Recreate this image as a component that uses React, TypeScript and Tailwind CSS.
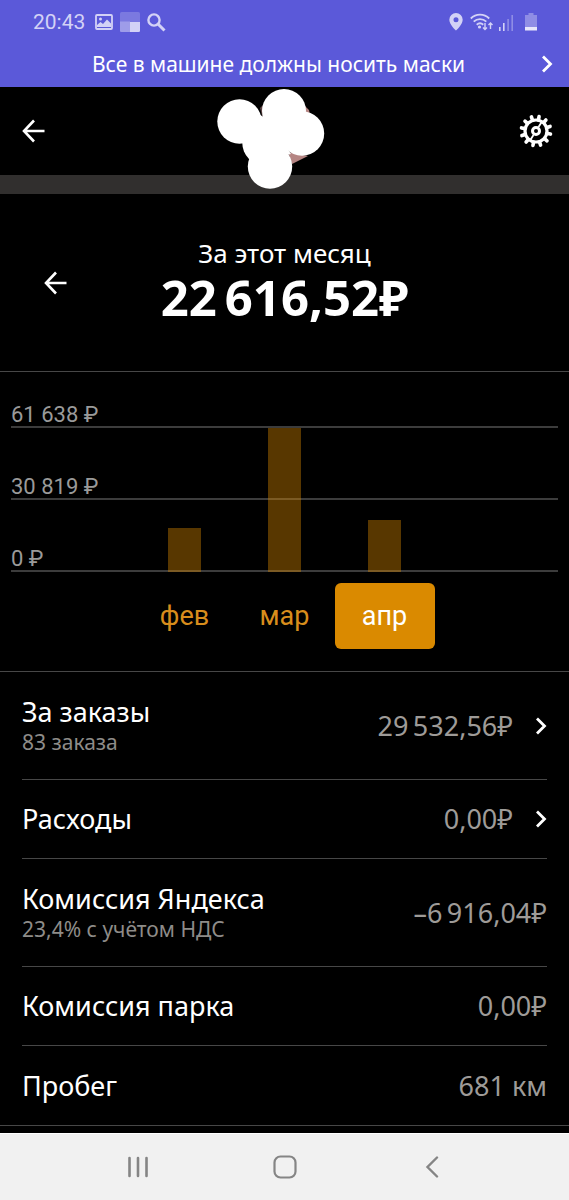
import clsx from "clsx";

type Month = {
  id: number,
  name: string,
  height: number
}

type RowProps = {
  title: string,
  note?: string,
  value: string,
  link?: boolean
}

const gridLabels = ['61 638 ₽', '30 819 ₽', '0 ₽']

const months: Month[] = [
  {id: 0, name: 'фев', height: 44},
  {id: 1, name: 'мар', height: 144},
  {id: 2, name: 'апр', height: 52},
]

const rows: RowProps[] = [
  {title: 'За заказы', note: '83 заказа', value: '29\u2009532,56₽', link: true},
  {title: 'Расходы', value: '0,00₽', link: true},
  {title: 'Комиссия Яндекса', note: '23,4% с учётом НДС', value: '–6\u2009916,04₽'},
  {title: 'Комиссия парка', value: '0,00₽'},
  {title: 'Пробег', value: '681 км'},
]

const teeth = [12, 42, 72, 102, 132, 162, 192, 222, 252, 282, 312, 342]

function ArrowLeft() {
  return (
    <svg width="24" height="24" viewBox="0 0 24 24" fill="none" stroke="#fff" strokeWidth="2.6">
      <path d="M12 1.500 2 12l10 10.500M2 12H22.500" />
    </svg>
  )
}

function Chevron() {
  return (
    <svg className="shrink-0" width="12" height="18" viewBox="0 0 12 18" fill="none" stroke="#fff" strokeWidth="2.8">
      <path d="M2 1.500 9.500 9 2 16.500" />
    </svg>
  )
}

function Gear() {
  return (
    <svg width="34" height="34" viewBox="-17 -17 34 34" fill="none" stroke="#fff">
      <circle r="11" strokeWidth="3.200" />
      {teeth.map((angle) => (
        <path key={angle} d="M11.500 0H14.800" strokeWidth="3.600" strokeLinecap="round" transform={`rotate(${angle})`} />
      ))}
      <circle r="3.500" strokeWidth="3" />
      <path d="M2.500-4 6-9.500M-2.500 4-6 9.500" strokeWidth="1.800" />
    </svg>
  )
}

function StatusBar() {
  return (
    <div className="flex h-11 items-center justify-between pl-[33px] pr-8 text-[#d3d2f6]">
      <div className="flex items-center">
        <span className="font-[Roboto,sans-serif] text-[21px] leading-6">20:43</span>
        <svg className="ml-[10px]" width="18" height="16" viewBox="0 0 18 16" fill="none" stroke="currentColor">
          <rect x="1" y="1" width="16" height="14" rx="1" strokeWidth="1.800" />
          <circle cx="5.500" cy="5" r="1.500" fill="currentColor" stroke="none" />
          <path d="M2 13V11l3.500-3 2.500 2 4-4.500 4 4V13z" fill="currentColor" stroke="none" />
        </svg>
        <svg className="ml-[7px]" width="20" height="20" viewBox="0 0 20 20">
          <rect width="20" height="20" rx="1.500" fill="#7b79e0" />
          <path d="M0 9.500h10V20H1.500Q0 20 0 18.500z" fill="#9e9ce9" />
          <path d="M10 10h10v8.500q0 1.500-1.500 1.500H10z" fill="#d3d2f6" />
        </svg>
        <svg className="ml-[7px]" width="19" height="19" viewBox="0 0 19 19" fill="none" stroke="currentColor" strokeWidth="2.400">
          <circle cx="7" cy="7" r="5.600" />
          <path d="m11 11 6.500 6.500" strokeWidth="3" />
        </svg>
      </div>
      <div className="flex items-center">
        <svg width="14" height="18" viewBox="0 0 14 18">
          <path fill="currentColor" fillRule="evenodd" d="M7 0a6.700 6.700 0 0 0-6.700 6.700C.3 11.500 7 17.500 7 17.500s6.700-6 6.700-10.800A6.700 6.700 0 0 0 7 0m0 4.200a2.500 2.500 0 1 1 0 5 2.500 2.500 0 0 1 0-5" />
        </svg>
        <svg className="ml-[7px]" width="23" height="18" viewBox="0 0 23 18" fill="none" stroke="currentColor" strokeWidth="1.800">
          <path d="M.8 5.500a13 13 0 0 1 18.400 0M3.700 8.700a9 9 0 0 1 12.600 0M6.700 11.700a5 5 0 0 1 6.600 0" />
          <circle cx="9.500" cy="14" r="1.600" fill="currentColor" stroke="none" />
          <path d="M15 10v6.500M13 14.500l2 2 2-2M20.500 16V10M18.500 12l2-2 2 2" strokeWidth="1.400" />
        </svg>
        <svg className="ml-[5px]" width="16" height="17" viewBox="0 0 16 17">
          <path d="M1 13h1.600v4H1zM5 9h1.600v8H5z" fill="#d3d2f6" />
          <path d="M9.300 5h1.600v12H9.300zM13.400 1h1.600v16h-1.600z" fill="#8f8de5" />
        </svg>
        <svg className="ml-[11px]" width="12" height="18" viewBox="0 0 12 18">
          <path d="M3.500 0h5v2H12v12H0V2h3.500z" fill="#8f8de5" />
          <path d="M0 14h12v3.500H0z" fill="#e8e7fb" />
        </svg>
      </div>
    </div>
  )
}

function Blob() {
  return (
    <svg className="absolute left-[216px] top-0" width="110" height="104" viewBox="216 87 110 104">
      <path d="M260 108l3-3 0 14z" fill="#5e4444" />
      <path d="M303 104l6 6 1 5-6-3zM288 152l20 4-16 8z" fill="#b58583" />
      <g fill="#fff">
        <circle cx="239.500" cy="121.500" r="22.200" />
        <circle cx="284" cy="111" r="22" />
        <circle cx="302" cy="133.500" r="22.200" />
        <circle cx="264.500" cy="143" r="22.200" />
        <circle cx="270" cy="166.500" r="22.200" />
        <path d="M257 113l10 6 24 35-9 2-36-14z" />
      </g>
    </svg>
  )
}

function Row({title, note, value, link}: RowProps) {
  const rowClass = clsx(
    "flex w-full items-center border-b border-[#474747] text-left",
    note ? 'h-[108px]' : 'h-[79px]'
  )
  const content = (
    <>
      <span className="grow">
        <span className="block text-[27px] leading-8">{title}</span>
        {note && <span className="block text-[21px] leading-7 text-[#8e8c89]">{note}</span>}
      </span>
      <span className="text-[27px] leading-8 text-[#9e9b98]">{value}</span>
      {link && <span className="ml-[22px]"><Chevron /></span>}
    </>
  )

  return link
    ? <button type="button" className={rowClass}>{content}</button>
    : <div className={rowClass}>{content}</div>
}

export default function App() {
  const current = 2

  return (
    <div className="flex min-h-screen flex-col bg-black font-['Noto_Sans',sans-serif] text-white">
      <div className="bg-[#5b59d9]">
        <StatusBar />
        <button type="button" className="flex h-[43px] w-full items-center px-4 pb-[3px] text-[21px] leading-7">
          <span className="grow text-center">Все в машине должны носить маски</span>
          <Chevron />
        </button>
      </div>

      <header className="relative flex h-[107px] items-start justify-between border-b-[19px] border-[#312f2e] pl-[22px] pr-4">
        <button type="button" aria-label="Назад" className="flex h-22 items-center"><ArrowLeft /></button>
        <Blob />
        <button type="button" aria-label="Настройки" className="flex h-22 items-center"><Gear /></button>
      </header>

      <section className="flex h-[178px] items-center border-b border-[#474747] px-11">
        <button type="button" aria-label="Предыдущий месяц" className="w-6"><ArrowLeft /></button>
        <div className="grow pr-6 text-center">
          <p className="text-[26px] leading-7">За этот месяц</p>
          <p className="text-[49px] font-bold leading-[60px]">{'22\u2009616,52₽'}</p>
        </div>
      </section>

      <section className="border-b border-[#474747] pb-[22px] font-[Roboto,sans-serif]">
        <div className="grid px-[11px]">
          <div className="col-start-1 row-start-1">
            {gridLabels.map((label, index) => (
              <div
                key={label}
                className={clsx(
                  "flex items-end border-b-2 border-[#3c3c3c] text-[22px] leading-[22px] text-[#9a9a9a]",
                  index === 0 ? 'h-14' : 'h-[72px]'
                )}
              >
                {label}
              </div>
            ))}
          </div>
          <div className="col-start-1 row-start-1 flex items-end justify-center">
            {months.map((item) => (
              <div key={item.id} className="flex w-[100px] justify-center">
                <div className="w-[33px] bg-[#dc8900]/40" style={{height: item.height}} />
              </div>
            ))}
          </div>
        </div>
        <div className="mt-[11px] flex justify-center">
          {months.map((item) => (
            <button
              key={item.id}
              type="button"
              className={clsx(
                "h-[66px] w-[100px] rounded-md text-[27px] leading-8",
                item.id === current ? 'bg-[#da8a00] text-white' : 'text-[#d88d1c]'
              )}
            >
              {item.name}
            </button>
          ))}
        </div>
      </section>

      <section className="border-b border-[#474747] px-[22px] [&>*:last-child]:border-b-0">
        {rows.map((item) => (
          <Row key={item.title} {...item} />
        ))}
      </section>

      <nav className="mt-[7px] flex h-[67px] items-center border-t border-white bg-[#f1f1f1] px-16">
        <button type="button" aria-label="Недавние" className="flex flex-1 justify-center">
          <svg width="22" height="22" viewBox="0 0 22 22" stroke="#858585" strokeWidth="2.600" strokeLinecap="round">
            <path d="M2.500 2v18M11 2v18M19.500 2v18" />
          </svg>
        </button>
        <button type="button" aria-label="Домой" className="flex flex-1 justify-center">
          <svg width="24" height="24" viewBox="0 0 24 24" fill="none" stroke="#858585" strokeWidth="2.200">
            <rect x="1.500" y="1.500" width="21" height="21" rx="6" />
          </svg>
        </button>
        <button type="button" aria-label="Назад" className="flex flex-1 justify-center">
          <svg width="14" height="22" viewBox="0 0 14 22" fill="none" stroke="#858585" strokeWidth="2.400" strokeLinecap="round">
            <path d="M12 1.500 2.500 11l9.500 9.500" />
          </svg>
        </button>
      </nav>
    </div>
  )
}
